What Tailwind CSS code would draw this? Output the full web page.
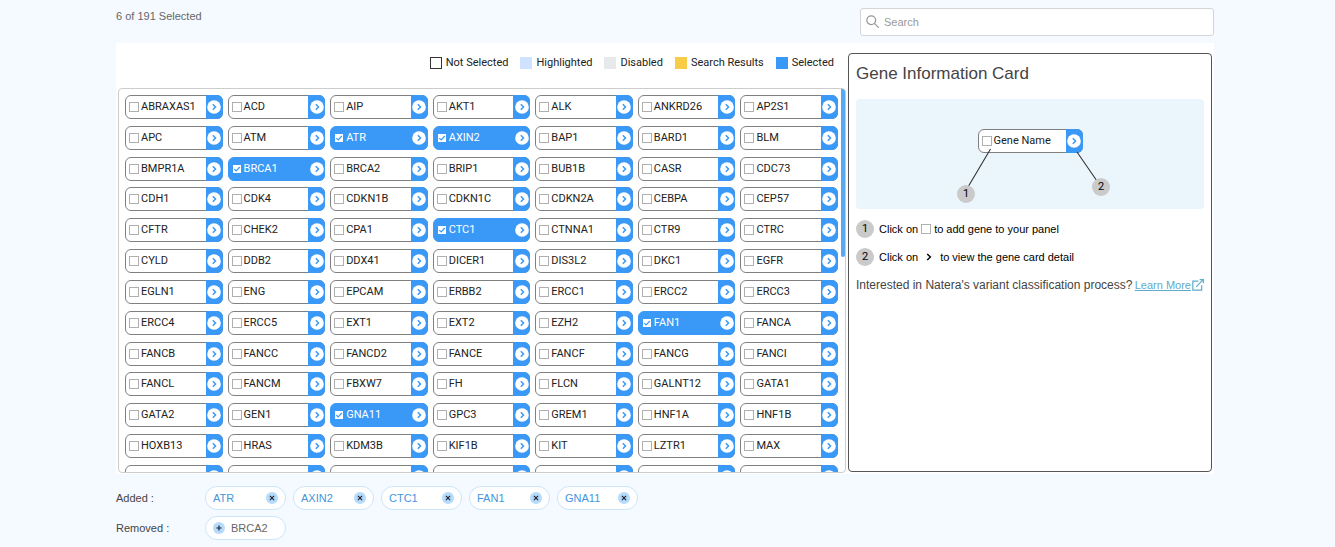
<!DOCTYPE html>
<html lang="en">
<head>
  <meta charset="UTF-8" />
  <meta name="viewport" content="width=device-width, initial-scale=1" />
  <title>Gene panel</title>
  <script src="https://cdn.jsdelivr.net/npm/@tailwindcss/browser@4"></script>
</head>
<body class="bg-[#f4faff] min-h-screen pl-[116px] pr-[121px] font-['Liberation_Sans',sans-serif] text-[#444]">

  <!-- Counter and search -->
  <header class="flex items-start justify-between pt-2 pb-[7px]">
    <p class="text-[11px] leading-4 text-[#666]">6 of 191 Selected</p>
    <div class="flex items-center gap-1 w-[354px] h-7 px-[5px] bg-white border border-[#d3d6d8] rounded-[3px]">
      <svg class="size-[14px] shrink-0" viewBox="0 0 14 14" fill="none" stroke="#999" stroke-width="1.3" stroke-linecap="round">
        <circle cx="5.2" cy="5.2" r="4.4" />
        <path d="M8.4 8.4 12.4 12.4" />
      </svg>
      <input type="search" aria-label="Search" placeholder="Search" class="w-full text-[11px] outline-none placeholder:text-[#999]" />
    </div>
  </header>

  <main class="grid grid-cols-[minmax(0,2fr)_minmax(0,1fr)] gap-[2px] px-[2px] pb-px bg-white">
    <section>
      <!-- Legend -->
      <ul class="flex justify-end gap-3 h-[45px] pt-3 pr-3 font-[Roboto,sans-serif] text-[11px] leading-4 text-[#222]">
        <li class="flex items-center gap-1 h-4"><span class="size-3 bg-white border border-[#333]"></span>Not Selected</li>
        <li class="flex items-center gap-1 h-4"><span class="size-3 bg-[#cfe2ff]"></span>Highlighted</li>
        <li class="flex items-center gap-1 h-4"><span class="size-3 bg-[#e8e9eb]"></span>Disabled</li>
        <li class="flex items-center gap-1 h-4"><span class="size-3 bg-[#f8cc46]"></span>Search Results</li>
        <li class="flex items-center gap-1 h-4"><span class="size-3 bg-[#3a99f7]"></span>Selected</li>
      </ul>

      <!-- Gene list with its scrollbar -->
      <div class="flex items-start h-[385px] overflow-hidden border border-[#ccc] rounded-[4px]">
        <div id="genes" class="grid grid-cols-7 content-between gap-x-[5px] flex-1 h-[400px] pt-[6px] pl-[6px] pr-[3px]"></div>
        <div class="w-1 h-[168px] bg-[#58a7f3] rounded-b-full"></div>
      </div>
    </section>

    <!-- Information card -->
    <aside class="mt-[10px] h-[419px] px-[7px] bg-white border border-[#555] rounded-[4px]">
      <h2 class="pt-2 text-[17px] leading-6">Gene Information Card</h2>

      <div class="relative h-[110px] mt-[13px] pt-[30px] bg-[#eaf6fb] rounded-[4px]">
        <div class="flex items-center w-[105px] h-6 mx-auto pl-[3px] bg-white border border-[#808080] rounded-[6px] font-[Roboto,sans-serif] text-[11px] text-[#222]">
          <input type="checkbox" id="sample" class="appearance-none size-[10px] shrink-0 bg-white border border-[#b0b0b0]" />
          <label for="sample" class="flex-1 pl-[2px] whitespace-nowrap">Gene Name</label>
          <button type="button" aria-label="View gene" class="flex items-center justify-center w-[17px] h-6 -mr-px bg-[#3a99f7] rounded-r-[6px]">
            <svg class="size-[14px]" viewBox="0 0 14 14" fill="none"><circle cx="7" cy="7" r="6.8" fill="#fff" /><path d="M5.8 4.3 8.5 7 5.8 9.7" stroke="#3a99f7" stroke-width="1.5" /></svg>
          </button>
        </div>
        <svg class="absolute top-0 left-1/2 -translate-x-1/2 w-[348px] h-[110px]" viewBox="0 0 348 110" stroke="#333" stroke-width="1.1">
          <path d="M134.5 50 112 88M221 53 241 82" />
        </svg>
        <span class="absolute top-[86px] left-1/2 -ml-[73px] flex items-center justify-center size-[18px] rounded-full bg-[#cacaca] font-[Roboto,sans-serif] text-[11px] text-black">1</span>
        <span class="absolute top-[79px] left-1/2 ml-[62px] flex items-center justify-center size-[18px] rounded-full bg-[#cacaca] font-[Roboto,sans-serif] text-[11px] text-black">2</span>
      </div>

      <ol class="mt-[11px] space-y-[10px] text-[11px] text-black">
        <li class="flex items-center h-[18px]">
          <span class="flex items-center justify-center size-[18px] mr-[5px] rounded-full bg-[#cacaca] font-[Roboto,sans-serif]">1</span>
          Click on <span class="size-[10px] mx-[3px] border border-[#b0b0b0]"></span> to add gene to your panel
        </li>
        <li class="flex items-center h-[18px]">
          <span class="flex items-center justify-center size-[18px] mr-[5px] rounded-full bg-[#cacaca] font-[Roboto,sans-serif]">2</span>
          Click on
          <svg class="w-[6px] h-2 mx-2" viewBox="0 0 6 8" fill="none" stroke="#000" stroke-width="1.4"><path d="M1.2 1 4.4 4 1.2 7" /></svg>
          to view the gene card detail
        </li>
      </ol>

      <p class="flex items-center justify-between mt-[11px] text-[12px] leading-4 whitespace-nowrap">
        Interested in Natera's variant classification process?
        <a href="#" class="flex items-center gap-px text-[#5fabc8]">
          <span class="text-[11px] underline">Learn More</span>
          <svg class="size-3" viewBox="0 0 13 13" fill="none" stroke="currentColor" stroke-width="1.3">
            <path d="M7 2.3H.9v9.8h9.6V6.8M4.6 8.6 11.8 1M8.3.7h4v4" />
          </svg>
        </a>
      </p>
    </aside>
  </main>

  <!-- Changes to the panel -->
  <footer class="pt-3 text-[11px]">
    <div class="flex items-center">
      <p class="w-[89px]">Added :</p>
      <ul id="added" class="flex gap-[7px]"></ul>
    </div>
    <div class="flex items-center mt-[6px]">
      <p class="w-[89px]">Removed :</p>
      <div class="flex items-center gap-[6px] w-[81px] h-6 pl-[7px] bg-white border border-[#cbe5fb] rounded-full text-[#666]">
        <button type="button" aria-label="Restore BRCA2">
          <svg class="size-3" viewBox="0 0 12 12"><circle cx="6" cy="6" r="6" fill="#b5dbfa" /><path d="M6 3.4v5.2M3.4 6h5.2" stroke="#223" stroke-width="1.2" /></svg>
        </button>
        BRCA2
      </div>
    </div>
  </footer>

  <script>
    const genes = [
      'ABRAXAS1', 'ACD', 'AIP', 'AKT1', 'ALK', 'ANKRD26', 'AP2S1',
      'APC', 'ATM', 'ATR', 'AXIN2', 'BAP1', 'BARD1', 'BLM',
      'BMPR1A', 'BRCA1', 'BRCA2', 'BRIP1', 'BUB1B', 'CASR', 'CDC73',
      'CDH1', 'CDK4', 'CDKN1B', 'CDKN1C', 'CDKN2A', 'CEBPA', 'CEP57',
      'CFTR', 'CHEK2', 'CPA1', 'CTC1', 'CTNNA1', 'CTR9', 'CTRC',
      'CYLD', 'DDB2', 'DDX41', 'DICER1', 'DIS3L2', 'DKC1', 'EGFR',
      'EGLN1', 'ENG', 'EPCAM', 'ERBB2', 'ERCC1', 'ERCC2', 'ERCC3',
      'ERCC4', 'ERCC5', 'EXT1', 'EXT2', 'EZH2', 'FAN1', 'FANCA',
      'FANCB', 'FANCC', 'FANCD2', 'FANCE', 'FANCF', 'FANCG', 'FANCI',
      'FANCL', 'FANCM', 'FBXW7', 'FH', 'FLCN', 'GALNT12', 'GATA1',
      'GATA2', 'GEN1', 'GNA11', 'GPC3', 'GREM1', 'HNF1A', 'HNF1B',
      'HOXB13', 'HRAS', 'KDM3B', 'KIF1B', 'KIT', 'LZTR1', 'MAX',
      'MBD4', 'MC1R', 'MEN1', 'MET', 'MITF', 'MLH1', 'MLH3',
    ];
    const added = ['ATR', 'AXIN2', 'CTC1', 'FAN1', 'GNA11'];
    const selected = ['BRCA1', ...added];

    document.getElementById('genes').innerHTML = genes.map((gene) => `
      <div class="relative flex items-center h-6 pl-[3px] bg-white border border-[#808080] rounded-[6px] font-[Roboto,sans-serif] text-[11px] leading-4 text-[#222] has-checked:bg-[#3a99f7] has-checked:border-[#3a99f7] has-checked:text-white">
        <input type="checkbox" id="gene-${gene}" ${selected.includes(gene) ? 'checked' : ''} class="peer appearance-none size-[10px] shrink-0 bg-white border border-[#b0b0b0] checked:border-[#3a99f7]" />
        <svg class="hidden peer-checked:block absolute left-[4px] size-2 pointer-events-none" viewBox="0 0 8 8" fill="none" stroke="#3a99f7" stroke-width="1.2"><path d="M1.3 4.1 3.2 6 6.8 2" /></svg>
        <label for="gene-${gene}" class="flex-1 pl-[2px]">${gene}</label>
        <button type="button" aria-label="View ${gene}" class="flex items-center justify-center w-[17px] h-6 -mr-px bg-[#3a99f7] rounded-r-[6px]">
          <svg class="size-[14px]" viewBox="0 0 14 14" fill="none"><circle cx="7" cy="7" r="6.8" fill="#fff" /><path d="M5.8 4.3 8.5 7 5.8 9.7" stroke="#3a99f7" stroke-width="1.5" /></svg>
        </button>
      </div>`).join('');

    document.getElementById('added').innerHTML = added.map((gene) => `
      <li class="flex items-center justify-between w-[81px] h-6 pl-[7px] pr-[7px] bg-white border border-[#cbe5fb] rounded-full text-[#4594dc]">
        ${gene}
        <button type="button" aria-label="Remove ${gene}">
          <svg class="size-3" viewBox="0 0 12 12"><circle cx="6" cy="6" r="6" fill="#b5dbfa" /><path d="m3.9 3.9 4.2 4.2M8.1 3.9 3.9 8.1" stroke="#223" stroke-width="1.2" /></svg>
        </button>
      </li>`).join('');
  </script>
</body>
</html>
